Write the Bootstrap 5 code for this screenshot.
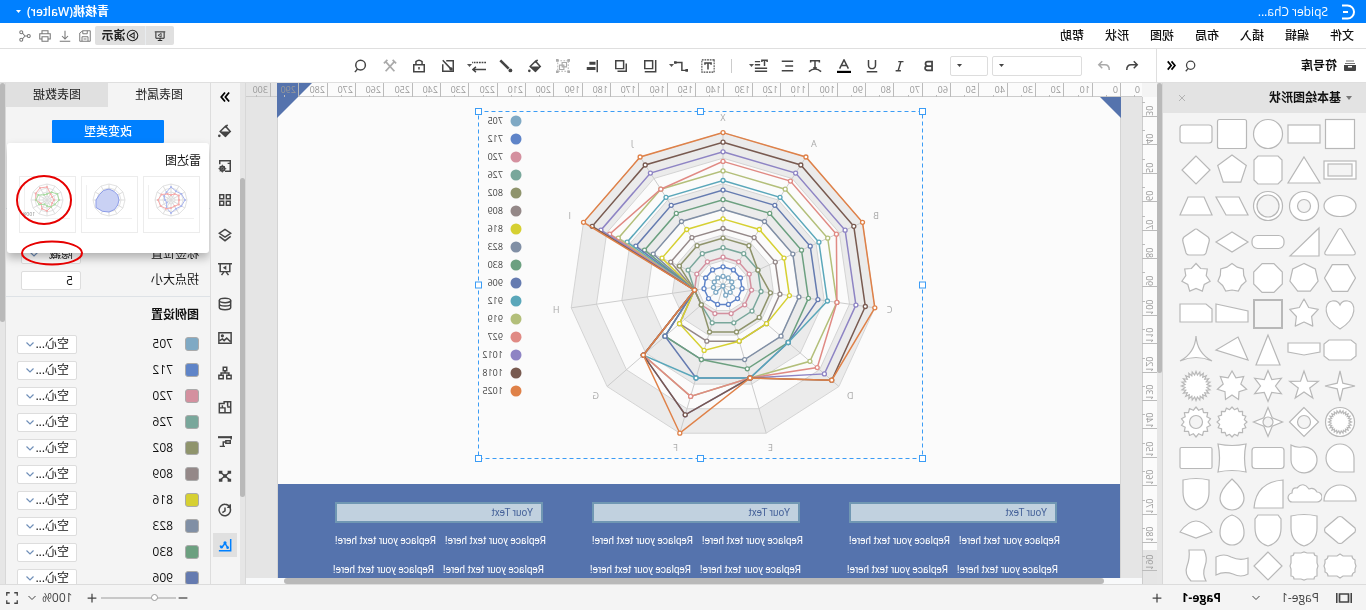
<!DOCTYPE html>
<html lang="zh-CN">
<head>
<meta charset="utf-8">
<meta name="viewport" content="width=device-width, initial-scale=1">
<title>Spider Chart</title>
<link href="https://cdn.jsdelivr.net/npm/bootstrap@5.3.0/dist/css/bootstrap.min.css" rel="stylesheet">
<style>
body{font-family:"Open Sans","Noto Sans CJK SC",sans-serif;font-size:12px;line-height:16px;color:#111;background:#f4f4f4;overflow:hidden}
/* the whole application is shown as a mirror view */
.mirror-view{height:100vh;transform:scaleX(-1)}
svg{display:block;flex:none}
.ic{fill:none;stroke:currentColor;stroke-width:1.7}
button.flat{border:0;background:none;padding:0;color:#444;display:flex;align-items:center;justify-content:center}
a{color:inherit;text-decoration:none}
.title-bar{height:23px;background:#0080ff;color:#fff}
.menu-bar{height:26px;border-bottom:1px solid #dfdfdf;background:#fff}
.menu-bar nav{gap:21px;padding-left:12px;font-weight:500}
.present{background:#e0e0e0;height:19px;border-radius:2px;margin-right:4px}
.present button{color:#222;height:19px}
.small-tools button{width:12px;color:#777}
.tool-bar{height:34px;background:#fff;border-bottom:1px solid #dfdfdf}
.lib-head{width:210px;border-right:1px solid #dfdfdf}
.tool-select{height:20px;border:1px solid #ddd;border-radius:2px;background:#fff;appearance:none;position:relative}
.sel-box{position:relative;height:20px}
.sel-box svg{position:absolute;right:6px;top:8px}
.tools-a{width:199px;margin-left:7px}.tools-b{width:375px}
.v-rule{width:1px;height:14px;background:#ccc;margin:0 9px 0 12px}
.dim{color:#aaa!important}
.library{width:203px;background:#f4f4f4;overflow:hidden;flex:none}
.lib-title{height:30px;background:#e3e3e3;flex:none}
.shape-grid{display:grid;grid-template-columns:repeat(5,36px);padding:3px 0 0 8px}
.shape-grid svg{fill:#fff;stroke:#b8b8b8;stroke-width:1.2}
.bar-v{background:#e6e6e6;border-left:1px solid #d8d8d8;flex:none}
.thumb-bar{background:#b9b9b9;border-radius:3px}
.stage{background:#e5e5e5;flex:1 1 0;min-width:0;overflow:hidden}
.sheet{width:844px;margin-left:21px;background:#fbfbfb;border:solid #d4d4d4;border-width:0 1px;overflow:hidden}
.chart-space{height:387px;flex:none}
.band{background:#5573ad;color:#fff;font-size:10px;line-height:12px;padding:18px 56px 0 60px;gap:46px;font-family:Roboto,sans-serif}
.band-col{width:211px}
.band-box{height:21px;width:208px;margin-left:3px;background:#c1d1df;border:2px solid #7097b3;color:#47639a;padding:3px 8px}
.band-pair{gap:9px;margin-top:12px;white-space:nowrap}
.band-pair + .band-pair{margin-top:17px;padding-left:2px}
.side-strip{width:30px;border-right:1px solid #ddd;padding:2px 0}
.side-icons{height:472px}
.side-icons button{width:24px;height:24px}
.side-icons .on{background:#e0e0e0;color:#0080ff}
.props{width:204px;background:#f4f4f4;position:relative;overflow:hidden}
.prop-tab{height:24px;color:#222!important}
.prop-tab.off{background:#e0e0e0}
.type-btn{width:112px;height:23px;background:#0080ff;color:#fff;font-size:12px;line-height:12px;border-radius:1px;font-weight:500;margin-top:13px}
.pop{position:absolute;left:1px;right:1px;top:60px;height:110px;background:#fff;border-radius:3px;box-shadow:0 5px 10px rgba(0,0,0,.28);padding:10px 8px;z-index:2}
.mini{border:1px solid #ececec;padding:0;background:#fff;width:57px;height:57px}
.minis{gap:5px;padding-left:1px}
.field{width:60px;height:19px;border:1px solid #ddd;border-radius:2px;background:#fff;font-size:12px;padding:0 7px;line-height:16px;appearance:none;color:#111}
.prop-row{height:26px;padding:0 15px 0 11px;flex:none}
.leg-row{height:26px;padding:0 11px;flex:none}
.leg-head{margin-top:3px;padding:10px 11px;height:35px}
.swatch{width:14px;height:14px;border:1px solid #aaa;border-radius:3px}
.choice{position:relative}
.choice svg{position:absolute;right:9px;top:7px;color:#6f8fb8}
.marks{position:absolute;left:0;top:0;z-index:3;pointer-events:none}
.foot{height:26px;border-top:1px solid #dcdcdc;background:#f4f4f4;color:#444}
.zoomer{appearance:none;width:75px;height:9px;background:linear-gradient(#c8c8c8,#c8c8c8) center/100% 2px no-repeat}
.zoomer::-webkit-slider-thumb{appearance:none;width:7px;height:7px;border:1px solid #999;border-radius:50%;background:#fff}
</style>
</head>
<body>
<div class="mirror-view d-flex flex-column">
  <header class="title-bar d-flex align-items-center flex-shrink-0">
    <svg width="16" height="16" viewBox="0 0 16 16" style="margin-left:10px" class="ic"><path d="M14 1.500H8.500A6.500 6.500 0 0 0 8.500 14.500H14M8 8H13" stroke-width="2"/></svg>
    <span class="ms-2 ps-1">Spider Cha...</span>
    <span class="ms-auto fw-semibold">青核桃(Walter)</span>
    <svg width="6" height="4" style="margin:0 15px 0 6px" fill="#fff"><path d="M0 0H5L2.500 3z"/></svg>
  </header>
  <div class="menu-bar d-flex align-items-center flex-shrink-0">
    <nav class="d-flex"><a href="#">文件</a><a href="#">编辑</a><a href="#">插入</a><a href="#">布局</a><a href="#">视图</a><a href="#">形状</a><a href="#">帮助</a></nav>
    <div class="ms-auto d-flex align-items-center" style="padding-right:19px">
      <div class="present d-flex">
        <button class="flat px-2 border-end border-secondary-subtle" data-ic="slides" data-size="12" aria-label="slides"></button>
        <button class="flat px-1 fw-semibold" style="width:50px" data-ic="play">演示</button>
      </div>
      <div class="small-tools d-flex gap-2">
        <button class="flat" data-ic="save" data-size="12" aria-label="save"></button>
        <button class="flat" data-ic="down" data-size="12" aria-label="download"></button>
        <button class="flat" data-ic="print" data-size="12" aria-label="print"></button>
        <button class="flat" data-ic="share" data-size="12" aria-label="share"></button>
      </div>
    </div>
  </div>
  <div class="tool-bar d-flex align-items-center flex-shrink-0">
    <div class="lib-head h-100 d-flex align-items-center flex-shrink-0">
      <svg width="14" height="14" viewBox="0 0 14 14" style="margin-left:9px"><path d="M3 2h8M2 4.500h10" stroke="#777"/><path d="M1 6h12v5q0 1-1 1H2q-1 0-1-1z" fill="#444"/><path d="M5 7h4v1.500H5z" fill="#fff"/></svg>
      <b class="fw-semibold" style="margin-left:6px">符号库</b>
      <button class="flat ms-auto" data-ic="search" data-size="12" aria-label="search"></button>
      <button class="flat text-black" style="margin:0 9px 0 8px" data-ic="dbl" data-size="11" aria-label="collapse"></button>
    </div>
    <button class="flat" style="margin-left:17px" data-ic="undo" data-size="14" aria-label="undo"></button>
    <button class="flat dim" style="margin:0 15px 0 14px" data-ic="redo" data-size="14" aria-label="redo"></button>
    <div class="sel-box"><select class="tool-select" style="width:90px" aria-label="font"><option></option></select><svg width="6" height="4" fill="#444"><path d="M0 0H5L2.500 3z"/></svg></div>
    <div class="sel-box ms-1"><select class="tool-select" style="width:38px" aria-label="size"><option></option></select><svg width="6" height="4" fill="#444"><path d="M0 0H5L2.500 3z"/></svg></div>
    <div class="tools-a d-flex" id="toolsA"></div>
    <span class="v-rule"></span>
    <div class="tools-b d-flex" id="toolsB"></div>
  </div>

  <main class="d-flex flex-fill" style="min-height:0">
    <aside class="library d-flex flex-column">
      <div class="lib-title d-flex align-items-center">
        <svg width="7" height="5" style="margin:0 4px 0 14px" fill="#777"><path d="M0 0H6L3 4z"/></svg>
        <span class="fw-semibold text-nowrap">基本绘图形状</span>
        <button class="flat dim ms-auto" style="margin-right:15px" data-ic="x" data-size="8" aria-label="close"></button>
      </div>
      <div class="shape-grid" id="shapes"></div>
    </aside>
    <div class="bar-v" style="width:6px"><div class="thumb-bar" style="height:290px"></div></div>
    <div style="width:15px;margin-top:14px" class="overflow-hidden flex-shrink-0" id="rulerV"></div>
    <div class="stage d-flex flex-column position-relative" id="stage">
      <div id="rulerH" class="flex-shrink-0 overflow-hidden"></div>
      <div class="sheet flex-fill d-flex flex-column">
        <div class="chart-space"></div>
        <div class="band flex-fill d-flex" id="band"></div>
      </div>
      <div style="height:6px;padding:0 17px 0 38px" class="bg-light flex-shrink-0"><div class="thumb-bar h-100" style="width:820px"></div></div>
      <svg id="chart" class="position-absolute top-0 start-0" width="897" height="495"></svg>
    </div>
    <div class="bar-v" style="width:6px;padding-top:95px"><div class="thumb-bar" style="height:319px"></div></div>
    <div class="side-strip flex-shrink-0"><div class="side-icons d-flex flex-column align-items-center justify-content-between" id="side"></div></div>
    <aside class="props d-flex flex-column flex-shrink-0">
      <div class="d-flex flex-shrink-0"><button class="flat prop-tab w-50">图表属性</button><button class="flat prop-tab off w-50">图表数据</button></div>
      <button class="btn type-btn p-0 mx-auto flex-shrink-0">改变类型</button>
      <div class="border-bottom flex-shrink-0" style="height:66px"></div>
      <div class="prop-row d-flex align-items-center justify-content-between" style="margin-top:32px"><label for="lp">标签位置</label><div class="choice"><select class="field d-block" id="lp"><option>隐藏</option></select></div></div>
      <div class="prop-row d-flex align-items-center justify-content-between"><label for="sz">拐点大小</label><input class="field" id="sz" value="5"></div>
      <div class="leg-head fw-semibold border-top flex-shrink-0">图例设置</div>
      <div id="legRows"></div>
      <div class="pop"><div style="height:23px">雷达图</div><div class="d-flex minis" id="minis"></div></div>
      <svg class="marks" width="204" height="190" fill="none" stroke="#e60000" stroke-width="2"><ellipse cx="166" cy="117" rx="27" ry="24"/><ellipse cx="158" cy="170" rx="30" ry="11.500"/></svg>
    </aside>
    <div class="bar-v" style="width:6px"><div class="thumb-bar" style="height:239px"></div></div>
  </main>

  <footer class="foot d-flex align-items-center flex-shrink-0">
    <svg width="16" height="12" viewBox="0 0 16 12" style="margin-left:14px" class="ic"><path d="M.7 1v10M15.300 1v10M3.500 2h9v8h-9z"/></svg>
    <span style="margin-left:17px;width:59px">Page-1</span>
    <svg width="8" height="6" class="ic"><path d="M.5 1L4 4.500L7.500 1" stroke-width="1"/></svg>
    <b class="text-black" style="margin-left:31px">Page-1</b>
    <button class="flat" style="margin-left:20px" data-ic="plus" data-size="10" aria-label="add page"></button>
    <div class="ms-auto d-flex align-items-center">
      <button class="flat" style="margin-right:2px" data-ic="minus" data-size="10" aria-label="zoom out"></button>
      <input type="range" class="zoomer" min="0" max="100" value="26" aria-label="zoom">
      <button class="flat ms-1" data-ic="plus" data-size="10" aria-label="zoom in"></button>
      <span class="text-end" style="width:45px">100%</span>
      <svg width="8" height="6" class="ic" style="margin-left:6px"><path d="M.5 1L4 4.500L7.500 1" stroke-width="1"/></svg>
      <button class="flat" style="margin:0 6px 0 10px" data-ic="full" data-size="12" aria-label="full screen"></button>
    </div>
  </footer>
</div>

<script>
const F='fill="currentColor" stroke="none"';
const I={
slides:'<path d="M1 2.500h14M2.500 3v8h11V3M5 14h6M8 11v3" stroke-width="1.300"/><path d="M6.500 4.500l4 2.500-4 2.500z" stroke-width="1"/>',
play:'<circle cx="8" cy="8" r="6.500" stroke-width="1.300"/><path d="M6 4.700l5.500 3.300L6 11.300z" stroke-width="1.300"/>',
save:'<path d="M1 1h10l4 3v11H1zM5 1v4h6V1M4 15V9h8v6M6 12h4" stroke-width="1.300"/>',
down:'<path d="M8 1v10M4 8l4 4 4-4M1 15h14" stroke-width="1.400"/>',
print:'<path d="M4 5V1h8v4M4 12H1V5h14v7h-3M4 9h8v6H4z" stroke-width="1.400"/>',
share:'<g stroke-width="1.400"><circle cx="3" cy="8" r="2"/><circle cx="13" cy="3" r="2"/><circle cx="13" cy="13" r="2"/><path d="M5 8h3l3.500-4M8 8l3.500 4"/></g>',
search:'<circle cx="8.500" cy="7" r="5.500"/><path d="M12 11.500l3 3.500"/>',
dbl:'<path d="M8 2L3 8l5 6M13.500 2l-5 6 5 6" stroke-width="2.400"/>',
undo:'<path d="M6 2.500L2 6.500 6 10.500M2 6.500H9q5 0 5 6"/>',
redo:'<path d="M10 2.500L14 6.500 10 10.500M14 6.500H7q-5 0-5 6"/>',
x:'<path d="M2 2l12 12M14 2L2 14"/>',
bold:'<path d="M4.500 3h5a2.400 2.400 0 0 1 0 5h-5zM4.500 8H10a2.400 2.400 0 0 1 0 5H4.500z" stroke-width="2"/>',
ital:'<path d="M4 3h6M7 13.500h6M7 3l3 10"/>',
under:'<path d="M4 1v6a4 4 0 0 0 8 0V1M2 14.500h12"/>',
color:'<path d="M3 11L8 1 13 11M5 7.500h6"/><path d="M0 13.500h16V16H0z" fill="#000" stroke="none"/>',
arc:'<path d="M3 4V2h10v2M8 2v8M6 10h4M1 14.500q7-6 14 0"/>',
align:'<path d="M1 2.500h13M1 8h9M1 13.500h13"/>',
space:'<path d="M1 3.500V1.500h6V3.500M4 1.500V8M9 3h6M9 6.500h6M1 10.500h14M1 14h14"/>',
tbox:'<rect x="1" y="1" width="14" height="14" stroke-dasharray="2 1" stroke-width="1.200"/><path d="M4.500 6.500V4.500h7V6.500M8 4.500V12"/>',
conn:'<path d="M1 13h6V4h8"/><path d="M13 2.500h3v3h-3zM0 11.500h3v3H0z" '+F+'/>',
front:'<path d="M5 2h9v9H5z"/><path d="M1.500 1v13.500H14"/>',
group:'<path d="M2 5v9h10M5 2h9v9H5z"/>',
lalign:'<path d="M2 1v14"/><path d="M4 3h7v3.500H4zM4 9h10v3.500H4z" '+F+'/>',
ungroup:'<path d="M2 2h12v12H2z" stroke-dasharray="2 1.500" stroke-width="1"/><path d="M4 4h5v5H4zM7 7h5v5H7z" stroke-width="1.300"/><path d="M0 0h3v3H0zM13 0h3v3h-3zM0 13h3v3H0zM13 13h3v3h-3z" '+F+'/>',
fill:'<path d="M7.500 2.500l6 6-6 5.500-5.500-5.500zM5 1l3 3"/><path d="M2 8.500h12L7.500 15z" '+F+'/><circle cx="14.500" cy="13.500" r="1.500" '+F+'/>',
pen:'<path d="M14.500 1.500L5 11" stroke-width="3"/><circle cx="3" cy="13" r="2.200" '+F+'/>',
dash:'<path d="M0 4h16" stroke-dasharray="2 1"/><path d="M0 12h15M11.500 9l3.500 3-3.500 3"/>',
edit:'<path d="M10 2H2v12h12V6M14 1.500L5 11"/><circle cx="4.500" cy="11.500" r="2" '+F+'/>',
lock:'<path d="M2 6.500h12V14.500H2zM4.500 6V3q3.500-3 7 0v3M8 9v3"/>',
cross:'<path d="M3 3l10 11M13 3L3 14M1 5l4-4M11 1l4 4" stroke-width="2"/>',
cfg:'<path d="M8 14H2V2h12v4M2 5h3"/><circle cx="11" cy="11" r="2.700"/><path d="M11 6.500v9M6.500 11h9M8 8l6 6M14 8l-6 6" stroke-width="1"/>',
grid:'<path d="M2 2h4.500v4.500H2zM9.500 2H14v4.500H9.500zM2 9.500h4.500V14H2zM9.500 9.500H14V14H9.500z"/>',
layers:'<path d="M8 1.500l6.500 4.500L8 10.500 1.500 6zM1.500 9.500L8 14.500l6.500-5"/>',
board:'<path d="M0 2h16M2.500 2v9h11V2M4 15l3-4M12 15l-3-4"/><path d="M6.500 4l4 2.500-4 2.500z" '+F+'/>',
db:'<ellipse cx="8" cy="4" rx="6.500" ry="2.500"/><path d="M1.500 4v8c0 3.300 13 3.300 13 0V4M1.500 8c0 3 13 3 13 0"/>',
pic:'<path d="M1 2h14v12H1zM2 12l4-4 3 3 2-2 3 2"/><circle cx="11" cy="5.500" r="1"/>',
tree:'<path d="M6 1.500h4v4H6zM1 10.500H6v4H1zM10 10.500h5v4H10zM8 5.500V8M3.500 10.500V8h9v2.500"/>',
plan:'<path d="M1.500 2v12.500h13V4H9V2zM5 2v5M1.500 8h4M8 14V9h3M11 6v3h3"/>',
gantt:'<path d="M0 2.500h16" stroke-width="2.400"/><path d="M1 1v4" /><path d="M2 6.500h5v3H2zM7 8h3v4.500M8 13h6" />',
net:'<path d="M3 4l10 8M13 4l-10 8"/><path d="M1 2h4v3.500H1zM11 2h4v3.500h-4zM1 11h4v3.500H1zM11 11h4v3.500h-4zM6 6h4v4H6z" '+F+'/>',
hist:'<path d="M2.500 5A6.500 6.500 0 1 0 8 1.500Q4 1.500 2.500 5M2 1.500V5h3.500M8 5v4l3 2"/>',
graph:'<path d="M1.500 1v13.500H15M4.500 11.500L8 6l3 4 3-1" /><circle cx="8" cy="5.500" r="1.800" '+F+'/><circle cx="12" cy="10.500" r="1.500" '+F+'/><circle cx="5" cy="11" r="1.500" '+F+'/>',
plus:'<path d="M8 1v14M1 8h14" stroke-width="2"/>',
minus:'<path d="M1 8h14" stroke-width="2"/>',
full:'<path d="M1 5V1h4M11 1h4v4M15 11v4h-4M5 15H1v-4"/>'
};
const icon=(n,s=14)=>`<svg class="ic" width="${s}" height="${s}" viewBox="0 0 16 16">${I[n]}</svg>`;
document.querySelectorAll('[data-ic]').forEach(b=>b.insertAdjacentHTML('afterbegin',icon(b.dataset.ic,b.dataset.size||13)));
const caret='<svg width="5" height="4" fill="#555"><path d="M0 0H5L2.500 3z"/></svg>';
const tool=n=>{const [k,o='']=n.split(':');return `<button class="flat flex-fill ${o=='d'?'dim':''}" style="width:0" aria-label="${k}">${icon(k)}${o=='c'?caret:''}</button>`};
toolsA.innerHTML=['bold','ital','under','color','arc','align','space:c'].map(tool).join('');
toolsB.innerHTML=['tbox','conn:c','front','group','lalign','ungroup:d','fill','pen','dash:c','edit','lock','cross:d','search'].map(tool).join('');
const turned=['dbl','cfg','plan','gantt','hist','graph'];
const flip=n=>n=='dbl'||n=='graph'||n=='hist'?`<span style="transform:scaleX(-1)">${icon(n,n=='dbl'?12:14)}</span>`:icon(n);
side.innerHTML=['dbl','fill','cfg','grid','layers','board','db','pic','tree','plan','gantt','net','hist','graph'].map(n=>`<button class="flat ${n=='graph'?'on':''} ${n=='dbl'?'text-black':''}" aria-label="${n}">${n=='dbl'?flip(n):icon(n)}</button>`).join('');

/* library shapes, each in a 36 by 36 cell with the origin in the middle */
const poly=p=>`<polygon points="${p}"/>`, path=d=>`<path d="${d}"/>`;
const rect=(w,h,r=0,e='')=>`<rect x="${-w/2}" y="${-h/2}" width="${w}" height="${h}" rx="${r}" ${e}/>`;
const circ=(r,e='')=>`<circle r="${r}" ${e}/>`;
const star=(n,R,r)=>{let s='';for(let i=0;i<2*n;i++){const a=Math.PI*i/n,q=i%2?r:R;s+=(q*Math.sin(a)).toFixed(1)+','+(-q*Math.cos(a)).toFixed(1)+' '}return poly(s)};
const reg=(n,R,o=0)=>{let s='';for(let i=0;i<n;i++){const a=2*Math.PI*(i+o)/n;s+=(R*Math.sin(a)).toFixed(1)+','+(-R*Math.cos(a)).toFixed(1)+' '}return poly(s)};
const g='fill="#f4f4f4"', soft=s=>`<g stroke-linejoin="round">${s}</g>`;
const shield='M-13-14Q0-17 13-14V-2Q13 12 0 16Q-13 12-13-2z';
const list=[
rect(29,29),rect(32,18),circ(14.500),rect(29,29,2),rect(32,18,3),
rect(32,18)+rect(24,12,0,g),poly('0,-13 -16,13 16,13'),poly('-10,-14 10,-14 14,-10 14,10 10,14 -10,14 -14,10 -14,-10'),reg(5,15),reg(4,14),
'<ellipse rx="16" ry="10.500"/>',circ(14.500)+circ(6.500,g),circ(14.500)+circ(11,g),poly('16,-9 -7,-9 -16,9 6,9'),poly('-8,-9 8,-9 16,9 -16,9'),
path('M-2-12Q0-15 2-12L15 10Q16 13 13 13H-13Q-16 13-15 10z'),poly('-15,-14 -15,14 14,14'),rect(32,13,5.500),poly('0,-10 16,0 0,10 -16,0'),path('M-2-12Q0-14 2-12L12-5Q14-3 13 0L10 11Q9 13 7 13H-7Q-9 13-10 11L-13 0Q-14-3-12-5z'),
reg(6,15.500,.5),reg(7,14.500),reg(8,15.500,.5),star(7,14.500,12),star(7,14.500,10.500),
path('M0 15C-18 4-16-12-8-13Q-2-14 0-9Q2-14 8-13C16-12 18 4 0 15z'),soft(star(5,15,8)),rect(28,28,0,'fill="#f4f4f4" stroke-width="2"'),poly('16,-10 -16,-3 -16,8 16,8'),poly('-10,-10 16,-10 16,8 -16,8 -16,-5'),
poly('-11,-10 11,-10 16,-6 16,6 11,10 -11,10 -16,6 -16,-6'),poly('-16,-7 16,-7 16,2 0,5 -16,2'),poly('0,-15 12,15 -12,15'),poly('-6,-13 -16,10 16,0'),path('M0-14Q1 3 16 11Q0 4-16 11Q-1 3 0-14z'),
star(4,15,4),star(5,15,6),star(6,15.500,7.500),star(7,15,9),star(24,14.500,11),
circ(14.500)+star(24,11.500,9),reg(4,14.500)+circ(6.500,g),star(4,14.500,6)+circ(5,g),soft(star(16,15,12.500)),soft(star(14,15,12))+circ(6.500,g),
path('M-14 14V0A14 14 0 1 1 0 14z'),path('M13-13V2A13 13 0 1 1 2-11Q8-10 13-13z'),rect(32,21,3),path('M-14-14Q0-11 14-14Q11 0 14 14Q0 11-14 14Q-11 0-14-14z'),rect(32,21,1.500),
path('M-16 7A16 16 0 0 1 16 7z'),path('M-13 8A5 5 0 0 1-13-2Q-10-7-5-5Q1-13 7-6Q12-7 12-1Q16 0 16 4Q15 8 12 8z'),path('M-15-14V14H14Q13-12-15-14z').replace('M-15-14V14H14Q13-12-15-14z','M-15-14V14H14Q12-12-15-14z'),path('M0-15Q12-4 12 4A12 12 0 1 1-12 4Q-12-4 0-15z'),path(shield),
path('M-2-13Q0-14 2-13L15-2Q16 0 15 2L2 13Q0 14-2 13L-15 2Q-16 0-15-2z'),path(shield),path('M-10-15H10L13-11V-2Q13 12 0 16Q-13 12-13-2V-11z'),path('M0-15Q12-11 12 3A12 12 0 0 1-12 3Q-12-11 0-15z'),path('M-16 2Q0-20 16 2L0 8z'),
path('M-12-10H-3L0-12 3-10H12Q12-7 15-6V-3L16 0 15 3V6Q12 7 12 10H3L0 12-3 10H-12Q-12 7-15 6V3L-16 0-15-3V-6Q-12-7-12-10z'),path('M-10-13H-3L0-14 3-13H10Q10-10 13-10V-3L14 0 13 3V10Q10 10 10 13H3L0 14-3 13H-10Q-10 10-13 10V3L-14 0-13-3V-10Q-10-10-10-13z'),reg(4,14),path('M16-9Q8-13 1-9Q-8-5-16-8V8Q-9 12-1 8Q8 5 16 9z'),path('M7-16H-8Q-12-8-9 0Q-6 8-10 15H5Q12 8 9 0Q6-8 7-16z')];
shapes.innerHTML=list.map(s=>`<svg width="36" height="36" viewBox="-18 -18 36 36">${s}</svg>`).join('');

/* rulers: as many marks as the stage has room for */
const W=stage.clientWidth,P=28.33;
rulerH.innerHTML=`<svg width="${W}" height="14"><rect width="${W}" height="14" fill="#e5e5e5"/><rect width="865" height="14" fill="#fbfbfb"/><path d="M0 13.500H${W}" stroke="#ccc"/></svg>`;
const sheetMarks=()=>{let s='';for(let k=-1;21+k*P<W-20;k++){const x=Math.round(21+k*P);s+=`<path d="M${x+.5} 0V14M${x+14.500} 12v2" stroke="#bbb"/><text x="${k<0?2:x+3}" y="10" font-size="9" fill="#999">${k<0?0:k*10}</text>`}return s};
const H=rulerV.clientHeight;
let v=`<svg width="15" height="${H}" font-size="9" fill="#999"><rect width="15" height="${H}" fill="#e5e5e5"/><rect width="15" height="453" fill="#fbfbfb"/><path d="M14.500 0V${H}" stroke="#ccc"/>`;
for(let k=0;20+k*28.4<H;k++){const y=Math.round(20+k*28.400);v+=`<path d="M0 ${y-.5}H15M12 ${y-14.500}h3" stroke="#bbb"/><text transform="translate(11 ${y-1}) rotate(-90)">${30+k*10}</text>`}
rulerV.innerHTML=v+'</svg>';

/* radar chart */
const names='705 712 720 726 802 809 816 823 830 906 912 919 927 1012 1018 1025'.split(' ');
const cols='#7fa9c4 #5f84c8 #d4909f #79a79b #8f946c #948888 #d6d032 #808fa5 #6ca080 #657bb0 #5aa7ba #b3bf7a #e08a84 #8e84c4 #785a50 #df8148'.split(' ');
const data=[[1,1,1,1,1,1,0,1,1,1,1],[2,2,2,2,2,2,2,2,2,2,2],[3,3,3,3,3,3,3,3,3,3,3],[4,4,4,4,4,4,4,3,3,4,4],[5,5,4,5,5,5,5,3,3,5,5],[6,6,6,6,6,6,6,6,3,6,6],[7,7,7,7,6,6,7,6,3,7,7],[8,8,8,8,8,8,8,8,3,8,8],[9,9,9,9,9,9,8,8,3,9,9],[10,10,10,10,9,10,10,8,3,10,10],[11,11,11,11,9,10,10,11,3,11,11],[12,12,12,12,12,10,12,11,3,12,12],[13,13,13,12,13,10,12,11,3,13,12],[14,14,14,14,14,10,14,11,3,14,14],[15,15,15,15,15,10,14,11,3,15,15],[16,16,16,16,15,10,16,11,3,16,16]];
const CX=419,CY=203,R=153.400,N=11;
const pt=(i,r,cx=CX,cy=CY,n=N)=>[(cx-r*Math.sin(2*Math.PI*i/n)).toFixed(1),(cy-r*Math.cos(2*Math.PI*i/n)).toFixed(1)];
let c='<path d="M21 14h21L21 35zM865 0h-35l35 35z" fill="#5573ad"/>'+sheetMarks();
for(let k=6;k>0;k--)c+=`<polygon points="${data[0].map((_,i)=>pt(i,R*k/6)).join(' ')}" fill="${k%2?'#fbfbfb':'#ebebeb'}" stroke="#d4d4d4"/>`;
data[0].forEach((_,i)=>{const p=pt(i,R);c+=`<path d="M${CX} ${CY}L${p}" stroke="#ccc"/>`;const q=pt(i,R+15);c+=`<text x="${q[0]}" y="${+q[1]+3}" text-anchor="middle" font-size="9" fill="#aaa">${'XABCDEFGHIJ'[i]}</text>`});
data.forEach((d,s)=>{const ps=d.map((x,i)=>pt(i,R*x/16));c+=`<polygon points="${ps.join(' ')}" fill="none" stroke="${cols[s]}" stroke-width="1.500"/>`;ps.forEach(p=>c+=`<circle cx="${p[0]}" cy="${p[1]}" r="2" fill="#fff" stroke="${cols[s]}" stroke-width="1.300"/>`)});
names.forEach((n,i)=>c+=`<circle cx="626" cy="${38+18*i}" r="5.500" fill="${cols[i]}"/><text x="639" y="${41+18*i}" font-size="9" fill="#444">${n}</text>`);
c+='<rect x="219.500" y="28.500" width="444" height="347" fill="none" stroke="#3b9cf5" stroke-dasharray="4 3"/>';
[[0,0],[1,0],[2,0],[0,1],[2,1],[0,2],[1,2],[2,2]].forEach(([a,b])=>c+=`<rect x="${216.500+222*a}" y="${25.500+173.5*b}" width="6" height="6" fill="#fff" stroke="#3b9cf5"/>`);
chart.innerHTML=c;

const rp='<div class="d-flex band-pair"><span>Replace your text here!</span><span>Replace your text here!</span></div>';
band.innerHTML=`<div class="band-col"><div class="band-box">Your Text</div>${rp+rp}</div>`.repeat(3);

legRows.innerHTML=names.slice(0,10).map((n,i)=>`<div class="leg-row d-flex align-items-center"><span class="swatch" style="background:${cols[i]}"></span><label class="ms-2 ps-1" for="m${i}">${n}</label><div class="choice ms-auto"><select class="field d-block" id="m${i}"><option>空心...</option></select><svg class="ic" width="8" height="5"><path d="M.5 .5L4 4 7.500 .5" stroke-width="1.200"/></svg></div></div>`).join('');
lp.insertAdjacentHTML('afterend','<svg class="ic" width="8" height="5"><path d="M.5 .5L4 4 7.500 .5" stroke-width="1.200"/></svg>');

/* chart type previews */
const web=()=>{let s='';for(let k=1;k<5;k++)s+=`<polygon points="${[...Array(12)].map((_,i)=>pt(i,k*4,28,23,12)).join(' ')}" fill="none" stroke="#e2e2e2"/>`;for(let i=0;i<12;i++)s+=`<path d="M28 23L${pt(i,16,28,23,12)}" stroke="#ddd"/>`;return s+'<path d="M5 41.500h46M50.500 8v33" stroke="#f0f0f0"/>'};
const pl=(a,col,f='none')=>{const q=a.map((r,i)=>pt(i,r,28,23,12));return `<polygon points="${q.join(' ')}" fill="${f}" stroke="${col}"/>`+(f=='none'?q.map(p=>`<circle cx="${p[0]}" cy="${p[1]}" r="1" fill="${col}"/>`).join(''):'')};
const art=[pl([13,10,12,14,12,10,13,9,5,6,8,9],'#a9b5ee')+pl([5,7,9,8,9,7,8,10,12,13,11,7],'#f6a9a9'),pl([11,11,13,15,13,12,11,10,10,10,10,11].reverse(),'#8c9ce8','#c9d1f4'),pl([13,7,6,7,6,8,11,10,7,11,13,14],'#f6a9a9')+pl([6,9,12,12,9,8,6,5,9,11,10,6],'#a8dba0')+'<text x="40" y="39" font-size="5" fill="#888">100%</text>'];
minis.innerHTML=art.map(a=>`<button class="mini"><svg width="55" height="55">${web()}${a}</svg></button>`).join('');
</script>
<script src="https://cdn.jsdelivr.net/npm/bootstrap@5.3.0/dist/js/bootstrap.bundle.min.js"></script>
</body>
</html>
